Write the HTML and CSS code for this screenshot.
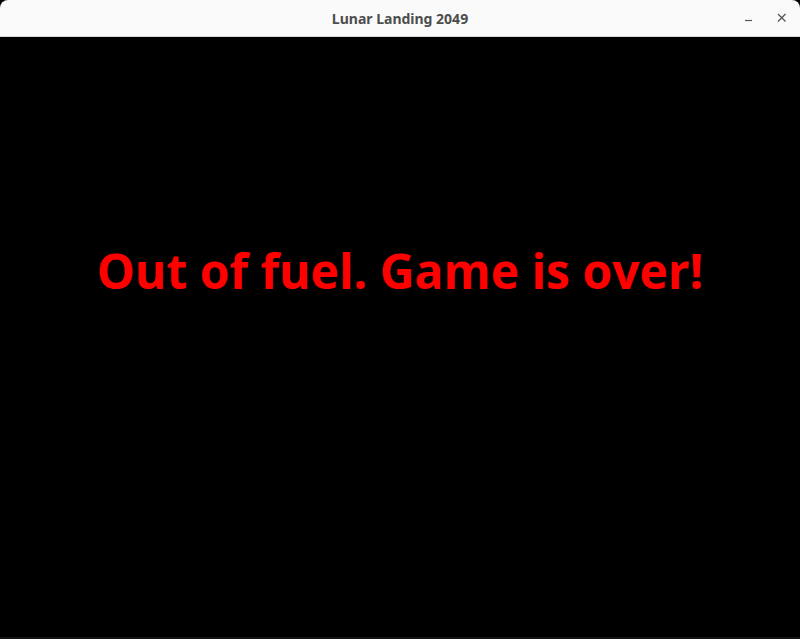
FILE: index.html
```html
<!DOCTYPE html>
<html>
<head>
<meta charset="utf-8">
<link rel="stylesheet" href="styles.css">
</head>
<body>
<div class="window">
  <header class="titlebar">
    <span class="title">Lunar Landing 2049</span>
    <div class="controls">
      <span class="btn">
        <svg width="16" height="16" viewBox="0 0 16 16"><line x1="4" y1="10.5" x2="11" y2="10.5" stroke="#555" stroke-width="1.2"/></svg>
      </span>
      <span class="btn">
        <svg width="16" height="16" viewBox="0 0 16 16"><path d="M4 4 L11.5 11.5 M11.5 4 L4 11.5" stroke="#555" stroke-width="1.3" fill="none"/></svg>
      </span>
    </div>
  </header>
  <main class="game">
    <h1 class="message">Out of fuel. Game is over!</h1>
  </main>
</div>
</body>
</html>
```
FILE: styles.css
```css
html, body {
  margin: 0;
  padding: 0;
  background: #000;
}
.window {
  width: 800px;
  height: 639px;
  display: flex;
  flex-direction: column;
  background: #000;
  overflow: hidden;
}
.titlebar {
  position: relative;
  height: 36px;
  flex: none;
  background: #fafafa;
  border-bottom: 1px solid #d8d8d8;
  border-radius: 8px 8px 0 0;
  display: flex;
  align-items: center;
  justify-content: center;
}
.title {
  font-family: "Noto Sans", "DejaVu Sans", sans-serif;
  font-weight: 700;
  font-size: 14px;
  color: #4d4d4d;
}
.controls {
  position: absolute;
  right: 10px;
  top: 10px;
  display: flex;
  gap: 17px;
}
.btn {
  width: 16px;
  height: 16px;
  display: block;
}
.btn svg {
  display: block;
}
.game {
  flex: 1;
  background: #000;
  border-bottom: 2px solid #141414;
  display: flex;
  justify-content: center;
}
.message {
  margin: 0;
  padding-top: 201px;
  font-family: "Open Sans", "Noto Sans", sans-serif;
  font-weight: 700;
  font-size: 48px;
  line-height: 66px;
  color: #ff0000;
}
```
